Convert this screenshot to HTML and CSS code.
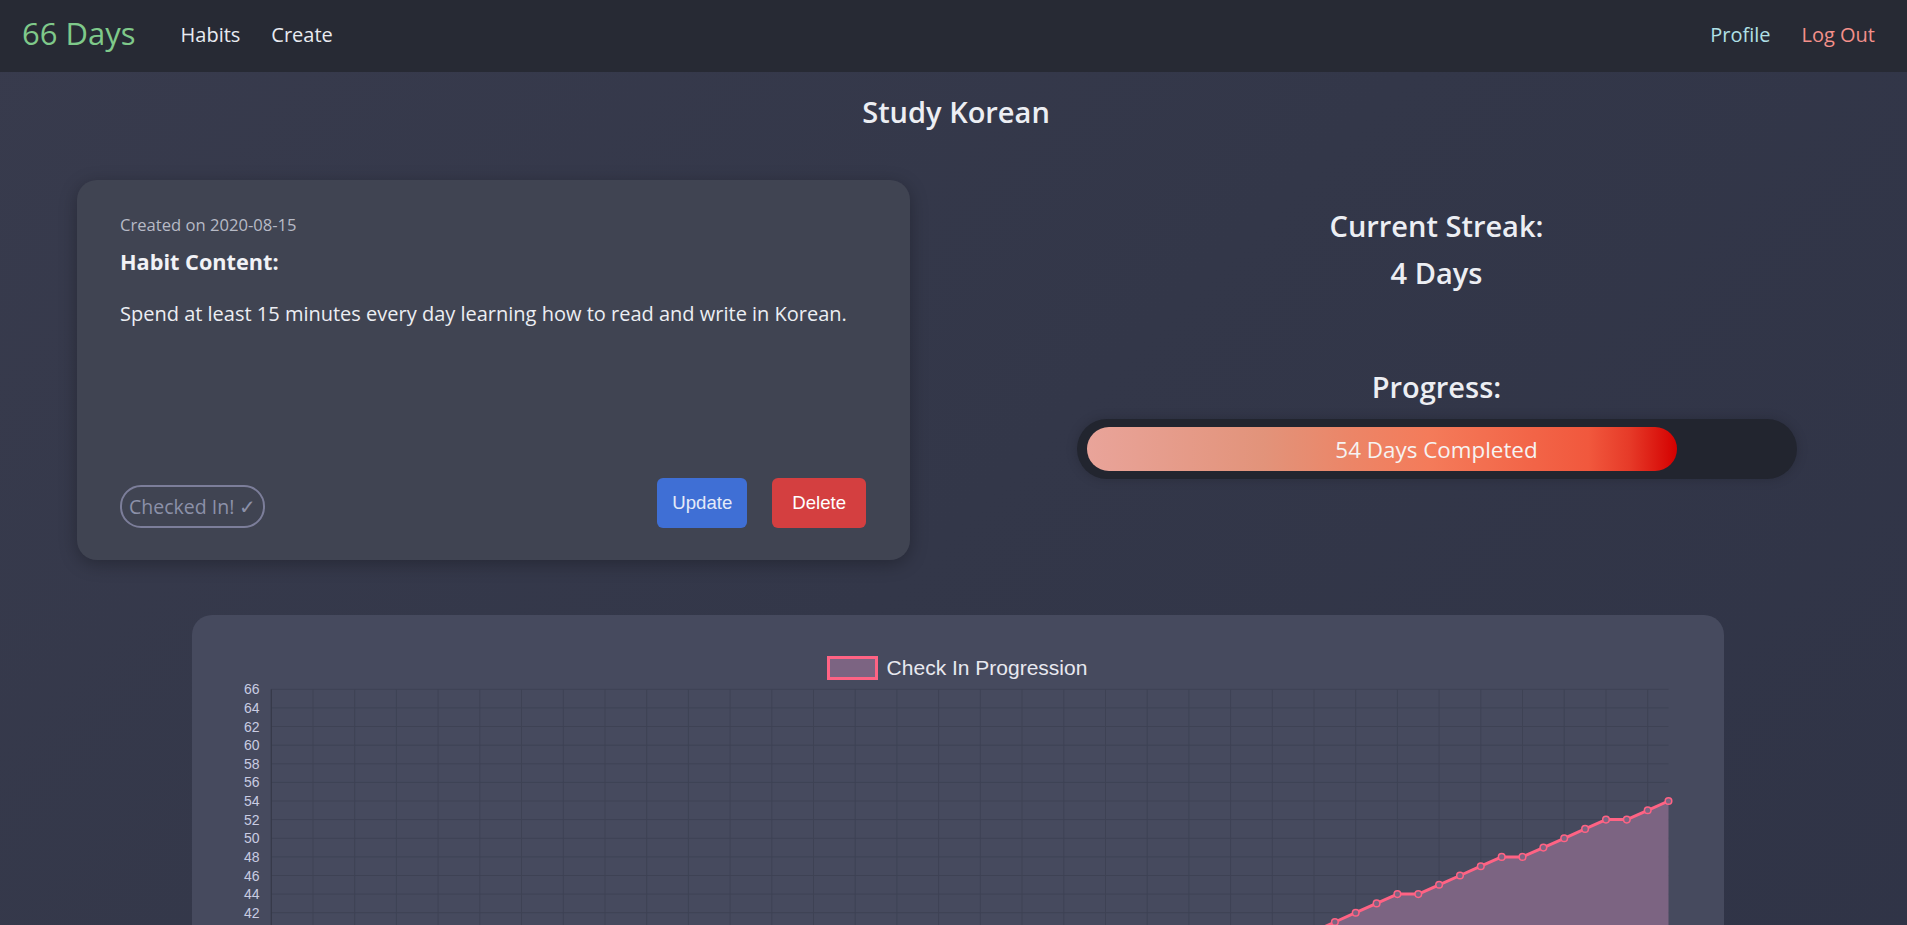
FILE: index.html
```html
<!DOCTYPE html>
<html lang="en">
<head>
<meta charset="utf-8">
<title>66 Days - Study Korean</title>
<link rel="stylesheet" href="styles.css">
</head>
<body>
<nav class="navbar">
  <a class="brand" href="#">66 Days</a>
  <ul class="nav-links">
    <li><a href="#">Habits</a></li>
    <li><a href="#">Create</a></li>
  </ul>
  <ul class="nav-links nav-right">
    <li><a class="profile" href="#">Profile</a></li>
    <li><a class="logout" href="#">Log Out</a></li>
  </ul>
</nav>

<main>
  <h1 class="page-title">Study Korean</h1>

  <section class="habit-row">
    <div class="habit-card">
      <p class="created">Created on 2020-08-15</p>
      <h4 class="content-title">Habit Content:</h4>
      <p class="content">Spend at least 15 minutes every day learning how to read and write in Korean.</p>
      <div class="card-footer">
        <span class="checked">Checked In! ✓</span>
        <div class="actions">
          <button class="btn btn-update">Update</button>
          <button class="btn btn-delete">Delete</button>
        </div>
      </div>
    </div>

    <div class="stats">
      <h3 class="stat">Current Streak:</h3>
      <h3 class="stat">4 Days</h3>
      <h3 class="stat progress-title">Progress:</h3>
      <div class="track">
        <div class="bar">
          <div class="fill" style="width: 84.3%"></div>
          <span class="bar-label">54 Days Completed</span>
        </div>
      </div>
    </div>
  </section>

  <section class="chart-card">
    <div class="legend">
      <span class="legend-box"></span>
      <span class="legend-text">Check In Progression</span>
    </div>
    <svg class="chart" width="1532" height="700" viewBox="0 65 1532 700" xmlns="http://www.w3.org/2000/svg">
      <g class="grid" stroke="#3e4254" stroke-width="1" fill="none">
        <path d="M79.3 74.3H1476.5M79.3 92.9H1476.5M79.3 111.5H1476.5M79.3 130.2H1476.5M79.3 148.8H1476.5M79.3 167.4H1476.5M79.3 186H1476.5M79.3 204.6H1476.5M79.3 223.3H1476.5M79.3 241.9H1476.5M79.3 260.5H1476.5M79.3 279.1H1476.5M79.3 297.7H1476.5M79.3 316.4H1476.5M79.3 335H1476.5M79.3 353.6H1476.5M79.3 372.2H1476.5M79.3 390.8H1476.5M79.3 409.5H1476.5M79.3 428.1H1476.5M79.3 446.7H1476.5M79.3 465.3H1476.5M79.3 483.9H1476.5M79.3 502.6H1476.5M79.3 521.2H1476.5M79.3 539.8H1476.5M79.3 558.4H1476.5M79.3 577H1476.5M79.3 595.7H1476.5M79.3 614.3H1476.5M79.3 632.9H1476.5M79.3 651.5H1476.5M79.3 670.1H1476.5"/>
        <path d="M121 74.3V698.8M162.7 74.3V698.8M204.4 74.3V698.8M246.1 74.3V698.8M287.8 74.3V698.8M329.5 74.3V698.8M371.3 74.3V698.8M413 74.3V698.8M454.7 74.3V698.8M496.4 74.3V698.8M538.1 74.3V698.8M579.8 74.3V698.8M621.5 74.3V698.8M663.2 74.3V698.8M704.9 74.3V698.8M746.6 74.3V698.8M788.3 74.3V698.8M830 74.3V698.8M871.8 74.3V698.8M913.5 74.3V698.8M955.2 74.3V698.8M996.9 74.3V698.8M1038.6 74.3V698.8M1080.3 74.3V698.8M1122 74.3V698.8M1163.7 74.3V698.8M1205.4 74.3V698.8M1247.1 74.3V698.8M1288.8 74.3V698.8M1330.5 74.3V698.8M1372.2 74.3V698.8M1414 74.3V698.8M1455.7 74.3V698.8"/>
      </g>
      <path d="M79.3 74.3V698.8M69.3 688.8H1476.5" stroke="#363949" stroke-width="1.2" fill="none"/>
      <g class="ylabels" font-family="'Liberation Sans', Arial, sans-serif" font-size="14" fill="#c9cce2" text-anchor="end">
        <text x="67.6" y="79.3">66</text><text x="67.6" y="97.9">64</text><text x="67.6" y="116.5">62</text><text x="67.6" y="135.2">60</text><text x="67.6" y="153.8">58</text><text x="67.6" y="172.4">56</text><text x="67.6" y="191">54</text><text x="67.6" y="209.6">52</text><text x="67.6" y="228.3">50</text><text x="67.6" y="246.9">48</text><text x="67.6" y="265.5">46</text><text x="67.6" y="284.1">44</text><text x="67.6" y="302.7">42</text><text x="67.6" y="321.4">40</text><text x="67.6" y="340">38</text><text x="67.6" y="358.6">36</text><text x="67.6" y="377.2">34</text><text x="67.6" y="395.8">32</text><text x="67.6" y="414.5">30</text><text x="67.6" y="433.1">28</text><text x="67.6" y="451.7">26</text><text x="67.6" y="470.3">24</text><text x="67.6" y="488.9">22</text><text x="67.6" y="507.6">20</text><text x="67.6" y="526.2">18</text><text x="67.6" y="544.8">16</text><text x="67.6" y="563.4">14</text><text x="67.6" y="582">12</text><text x="67.6" y="600.7">10</text><text x="67.6" y="619.3">8</text><text x="67.6" y="637.9">6</text><text x="67.6" y="656.5">4</text><text x="67.6" y="675.1">2</text><text x="67.6" y="693.8">0</text>
      </g>
      <polygon fill="#7c6482" points="79.3,688.7 100.2,679.4 121,670 141.9,660.7 162.7,651.4 183.6,651.4 204.4,642.1 225.3,632.8 246.1,623.5 267,614.2 287.8,614.2 308.7,604.9 329.5,595.6 350.4,586.3 371.3,577 392.1,577 413,567.7 433.8,558.4 454.7,549.1 475.5,539.7 496.4,539.7 517.2,530.4 538.1,521.1 558.9,511.8 579.8,502.5 600.7,502.5 621.5,493.2 642.4,483.9 663.2,474.6 684.1,465.3 704.9,465.3 725.8,456 746.6,446.7 767.5,437.3 788.3,428 809.2,428 830,418.7 850.9,409.4 871.8,400.1 892.6,390.8 913.5,390.8 934.3,381.5 955.2,372.2 976,362.9 996.9,353.6 1017.7,353.6 1038.6,344.3 1059.4,335 1080.3,325.7 1101.1,316.3 1122,316.3 1142.9,307 1163.7,297.7 1184.6,288.4 1205.4,279.1 1226.3,279.1 1247.1,269.8 1268,260.5 1288.8,251.2 1309.7,241.9 1330.5,241.9 1351.4,232.6 1372.2,223.3 1393.1,213.9 1414,204.6 1434.8,204.6 1455.7,195.3 1476.5,186 1476.5,688.8 79.3,688.8"/>
      <polyline fill="none" stroke="#ff6384" stroke-width="3" stroke-linejoin="round" points="79.3,688.7 100.2,679.4 121,670 141.9,660.7 162.7,651.4 183.6,651.4 204.4,642.1 225.3,632.8 246.1,623.5 267,614.2 287.8,614.2 308.7,604.9 329.5,595.6 350.4,586.3 371.3,577 392.1,577 413,567.7 433.8,558.4 454.7,549.1 475.5,539.7 496.4,539.7 517.2,530.4 538.1,521.1 558.9,511.8 579.8,502.5 600.7,502.5 621.5,493.2 642.4,483.9 663.2,474.6 684.1,465.3 704.9,465.3 725.8,456 746.6,446.7 767.5,437.3 788.3,428 809.2,428 830,418.7 850.9,409.4 871.8,400.1 892.6,390.8 913.5,390.8 934.3,381.5 955.2,372.2 976,362.9 996.9,353.6 1017.7,353.6 1038.6,344.3 1059.4,335 1080.3,325.7 1101.1,316.3 1122,316.3 1142.9,307 1163.7,297.7 1184.6,288.4 1205.4,279.1 1226.3,279.1 1247.1,269.8 1268,260.5 1288.8,251.2 1309.7,241.9 1330.5,241.9 1351.4,232.6 1372.2,223.3 1393.1,213.9 1414,204.6 1434.8,204.6 1455.7,195.3 1476.5,186"/>
      <g fill="#7c6482" stroke="#ff6384" stroke-width="1.5">
        <circle cx="1080.3" cy="325.7" r="3.3"/><circle cx="1101.1" cy="316.3" r="3.3"/><circle cx="1122" cy="316.3" r="3.3"/><circle cx="1142.9" cy="307" r="3.3"/><circle cx="1163.7" cy="297.7" r="3.3"/><circle cx="1184.6" cy="288.4" r="3.3"/><circle cx="1205.4" cy="279.1" r="3.3"/><circle cx="1226.3" cy="279.1" r="3.3"/><circle cx="1247.1" cy="269.8" r="3.3"/><circle cx="1268" cy="260.5" r="3.3"/><circle cx="1288.8" cy="251.2" r="3.3"/><circle cx="1309.7" cy="241.9" r="3.3"/><circle cx="1330.5" cy="241.9" r="3.3"/><circle cx="1351.4" cy="232.6" r="3.3"/><circle cx="1372.2" cy="223.3" r="3.3"/><circle cx="1393.1" cy="213.9" r="3.3"/><circle cx="1414" cy="204.6" r="3.3"/><circle cx="1434.8" cy="204.6" r="3.3"/><circle cx="1455.7" cy="195.3" r="3.3"/><circle cx="1476.5" cy="186" r="3.3"/>
      </g>
    </svg>
  </section>
</main>
</body>
</html>
```

FILE: styles.css
```css
* {
  box-sizing: border-box;
}

html, body {
  margin: 0;
  padding: 0;
}

body {
  font-family: "Open Sans", "Liberation Sans", Arial, sans-serif;
  color: #eceef3;
  background: linear-gradient(135deg, #383b4d 0%, #333749 45%, #2f3346 100%);
  min-height: 100vh;
}

a {
  text-decoration: none;
  color: inherit;
}

/* ---------- Navbar ---------- */
.navbar {
  height: 72px;
  display: flex;
  align-items: center;
  padding: 0 32px 3px 22px;
  background: #272a34;
}

.brand {
  font-size: 31px;
  color: #7fc98a;
  margin-right: 45px;
  line-height: 1;
  margin-top: -2px;
}

.nav-links {
  list-style: none;
  display: flex;
  gap: 31px;
  margin: 0;
  padding: 0;
  font-size: 20px;
  color: #e9ebf1;
}

.nav-right {
  margin-left: auto;
}

.profile {
  color: #b0e0e6;
}

.logout {
  color: #f4908a;
}

/* ---------- Title ---------- */
.page-title {
  margin: 0;
  padding: 16px 0 0 5px;
  text-align: center;
  font-size: 29px;
  font-weight: 600;
  line-height: 47px;
}

/* ---------- Habit row ---------- */
.habit-row {
  display: grid;
  grid-template-columns: 833px 1fr;
  column-gap: 56px;
  padding-left: 77px;
  margin-top: 45px;
}

.habit-card {
  height: 380px;
  display: flex;
  flex-direction: column;
  padding: 33px 44px 32px 43px;
  background: #404452;
  border-radius: 20px;
  box-shadow: 0 4px 18px rgba(0, 0, 0, 0.28);
}

.created {
  margin: 0;
  font-size: 16.6px;
  line-height: 1.5;
  color: #b7bac6;
}

.content-title {
  margin: 10px 0 0;
  font-size: 21.7px;
  font-weight: 700;
  line-height: 28.6px;
  color: #f1f2f6;
}

.content {
  margin: 23px 0 0;
  font-size: 20px;
  line-height: 1.5;
  color: #eceef3;
}

.card-footer {
  margin-top: auto;
  display: flex;
  align-items: flex-end;
  justify-content: space-between;
}

.checked {
  display: inline-flex;
  align-items: center;
  height: 43px;
  padding: 0 7px;
  border: 2px solid #7c7e9a;
  border-radius: 21px;
  color: #8c91a9;
  font-size: 19.5px;
}

.actions {
  display: flex;
  gap: 25px;
}

.btn {
  height: 50px;
  padding: 0 15px;
  border: none;
  border-radius: 6px;
  font-family: "Liberation Sans", Arial, sans-serif;
  font-size: 18.6px;
  color: #ffffff;
  cursor: pointer;
}

.btn-update {
  background: #3f6fd5;
  color: #e4eaf8;
}

.btn-delete {
  padding: 0 20px;
  background: #d43f40;
}

/* ---------- Stats ---------- */
.stats {
  padding-top: 21.6px;
  display: flex;
  flex-direction: column;
  align-items: center;
  text-align: center;
}

.stat {
  margin: 0;
  font-size: 29px;
  font-weight: 600;
  line-height: 47.5px;
  color: #eceef3;
}

.progress-title {
  margin-top: 66px;
}

.track {
  width: 720px;
  margin-top: 9px;
  padding: 8px 10px;
  background: #22252f;
  border-radius: 30px;
  box-shadow: 0 0 12px rgba(0, 0, 0, 0.18);
}

.bar {
  position: relative;
  height: 44px;
  display: flex;
  align-items: center;
  justify-content: center;
}

.fill {
  position: absolute;
  left: 0;
  top: 0;
  bottom: 0;
  border-radius: 22px;
  background: linear-gradient(to right, #e9a49a 0%, #e2937a 30%, #ec8567 45%, #f47b5a 58%, #f1583d 85%, #e63a28 92%, #d40000 100%);
}

.bar-label {
  position: relative;
  font-size: 22.4px;
  color: #f6f3f2;
}

/* ---------- Chart ---------- */
.chart-card {
  width: 1532px;
  margin: 55px 0 0 192px;
  padding-top: 41px;
  background: #464a5e;
  border-radius: 20px;
}

.legend {
  height: 24px;
  display: flex;
  align-items: center;
  justify-content: center;
  gap: 9px;
  padding-right: 2px;
}

.legend-box {
  width: 51px;
  height: 24px;
  background: #7c6482;
  border: 3px solid #ff6384;
}

.legend-text {
  font-family: "Liberation Sans", Arial, sans-serif;
  font-size: 21px;
  color: #e8e8ef;
}

.chart {
  display: block;
}
```
